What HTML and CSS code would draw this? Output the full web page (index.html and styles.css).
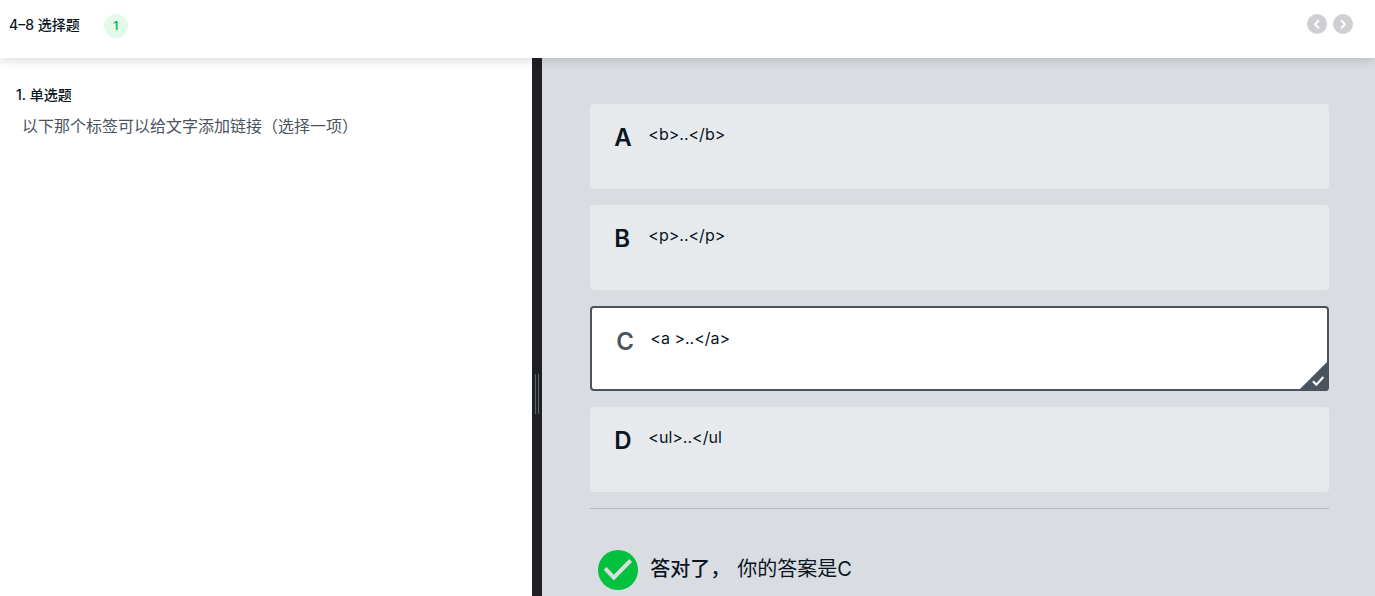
FILE: index.html
```html
<!DOCTYPE html>
<html lang="zh-CN">
<head>
<meta charset="utf-8">
<title>4-8 选择题</title>
<link rel="stylesheet" href="styles.css">
</head>
<body>
<header class="topbar">
  <h1 class="topbar-title">4–8 选择题</h1>
  <span class="badge">1</span>
  <nav class="pager" aria-label="题目切换">
    <button class="pager-button" type="button" aria-label="上一题">
      <svg viewBox="0 0 20 20"><path d="M12 6.2 8 10.3l4 4.1"/></svg>
    </button>
    <button class="pager-button" type="button" aria-label="下一题">
      <svg viewBox="0 0 20 20"><path d="m8 6.2 4 4.1-4 4.1"/></svg>
    </button>
  </nav>
</header>
<main class="workspace">
  <section class="question">
    <h2 class="question-title">1. 单选题</h2>
    <p class="question-text" id="question-text">以下那个标签可以给文字添加链接（选择一项）</p>
  </section>
  <div class="splitter" role="separator" aria-orientation="vertical"><span class="grip"></span></div>
  <section class="answers">
    <form class="options" role="radiogroup" aria-labelledby="question-text">
      <label class="option"><input class="option-input" type="radio" name="answer" value="A"><span class="option-letter">A</span><span class="option-text">&lt;b&gt;..&lt;/b&gt;</span></label>
      <label class="option"><input class="option-input" type="radio" name="answer" value="B"><span class="option-letter">B</span><span class="option-text">&lt;p&gt;..&lt;/p&gt;</span></label>
      <label class="option option-selected"><input class="option-input" type="radio" name="answer" value="C" checked><span class="option-letter">C</span><span class="option-text">&lt;a &gt;..&lt;/a&gt;</span>
        <svg class="option-mark" viewBox="0 0 30 30"><path class="mark-corner" d="M30 0v30H0z"/><path class="mark-tick" d="m14.5 20.5 3.3 3.5 6.7-7.5"/></svg>
      </label>
      <label class="option"><input class="option-input" type="radio" name="answer" value="D"><span class="option-letter">D</span><span class="option-text">&lt;ul&gt;..&lt;/ul</span></label>
    </form>
    <div class="result">
      <svg class="result-icon" viewBox="0 0 40 40"><circle cx="20" cy="20" r="20"/><path d="m7.2 18.3 8.6 9.4L32.6 10.5"/></svg>
      <p class="result-text"><strong class="result-verdict">答对了，</strong><span>你的答案是C</span></p>
    </div>
  </section>
</main>
</body>
</html>
```
FILE: styles.css
```css
* {
  box-sizing: border-box;
}

body {
  display: flex;
  flex-direction: column;
  height: 100vh;
  margin: 0;
  overflow: hidden;
  background: #fff;
  color: #0a1523;
  font-family: Inter, "Noto Sans CJK SC", sans-serif;
}

h1,
h2,
p {
  margin: 0;
}

.topbar {
  position: relative;
  z-index: 1;
  display: flex;
  flex: none;
  align-items: flex-start;
  height: 58px;
  padding: 14px 22px 0 9px;
  background: #fff;
  box-shadow: 0 2px 10px rgba(10, 21, 35, 0.16);
}

.topbar-title {
  font-size: 14px;
  font-weight: 500;
  line-height: 22px;
}

.badge {
  width: 24px;
  height: 24px;
  margin-left: 24px;
  border-radius: 50%;
  background: #e3f9ea;
  color: #02bf3e;
  font-size: 12px;
  font-weight: 600;
  line-height: 24px;
  text-align: center;
}

.pager {
  display: flex;
  gap: 6px;
  margin-left: auto;
}

.pager-button {
  width: 20px;
  height: 20px;
  padding: 0;
  border: 0;
  border-radius: 50%;
  background: #cecfd3;
}

.pager-button svg {
  display: block;
  fill: none;
  stroke: #fff;
  stroke-width: 2;
}

.workspace {
  display: grid;
  flex: 1;
  grid-template-rows: 100%;
  grid-template-columns: 39fr 10px 61fr;
  min-height: 0;
}

.question {
  padding: 26px 16px;
}

.question-title {
  font-size: 14px;
  font-weight: 500;
  line-height: 22px;
}

.question-text {
  padding: 8px 6px;
  color: #4b545e;
  font-size: 16px;
  line-height: 24px;
}

.splitter {
  display: flex;
  align-items: center;
  justify-content: center;
  padding-top: 134px;
  background: #1e2024;
  cursor: col-resize;
}

.grip {
  width: 4px;
  height: 40px;
  border: solid #5c656e;
  border-width: 0 1px;
}

.answers {
  padding: 46px 46px 0 48px;
  overflow: hidden;
  background: #d9dce0;
}

.options {
  display: flex;
  flex-direction: column;
  gap: 16px;
  padding-bottom: 16px;
  border-bottom: 1px solid #b5b9bf;
}

.option {
  position: relative;
  display: flex;
  gap: 10px;
  min-height: 85px;
  padding: 18px 24px;
  border-radius: 4px;
  background: #e6eaed;
}

.option-selected {
  border: 2px solid #4b545e;
  background: #fff;
}

.option-input {
  position: absolute;
  opacity: 0;
}

.option-letter {
  width: 24px;
  font-size: 24px;
  font-weight: 600;
  line-height: 32px;
}

.option-selected .option-letter {
  color: #4b545e;
}

.option-text {
  font-size: 16px;
  line-height: 24px;
}

.option-mark {
  position: absolute;
  right: -2px;
  bottom: -2px;
  width: 31px;
  height: 31px;
  border-bottom-right-radius: 4px;
}

.mark-corner {
  fill: #4b545e;
}

.mark-tick {
  fill: none;
  stroke: #fff;
  stroke-width: 2;
}

.result {
  display: flex;
  gap: 12px;
  padding: 41px 8px;
}

.result-icon {
  flex: none;
  width: 40px;
  height: 40px;
  fill: #02c13e;
}

.result-icon path {
  fill: none;
  stroke: #d9dce0;
  stroke-width: 4;
}

.result-text {
  display: flex;
  gap: 7px;
  font-size: 20px;
  line-height: 38px;
}

.result-verdict {
  font-weight: 500;
}
```
